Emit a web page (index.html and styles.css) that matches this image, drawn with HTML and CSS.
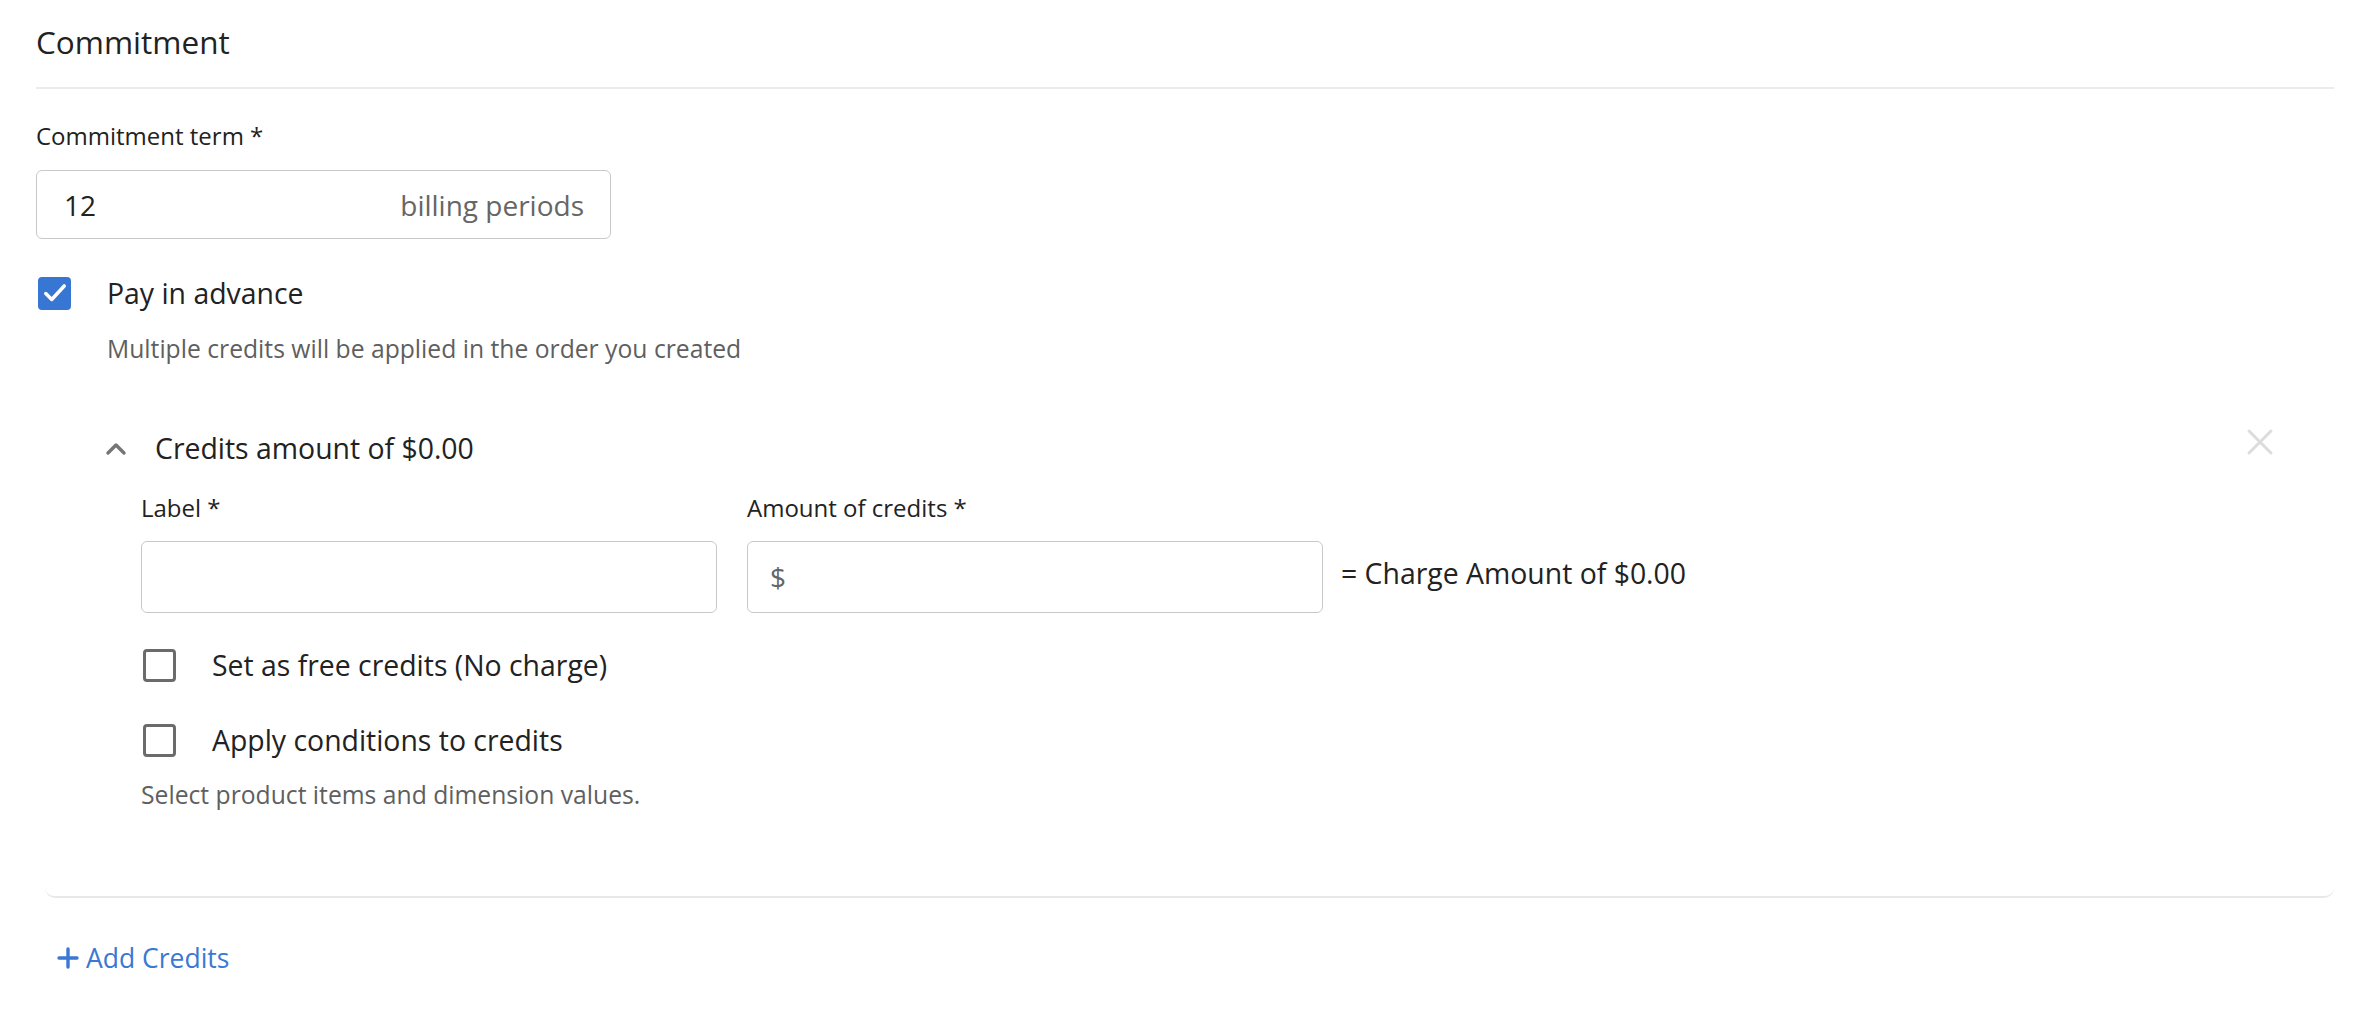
FILE: index.html
```html
<!DOCTYPE html>
<html lang="en">
<head>
<meta charset="utf-8">
<title>Commitment</title>
<link rel="stylesheet" href="styles.css">
</head>
<body>
<div class="page">
  <div class="section-header">
    <h2 class="section-title">Commitment</h2>
  </div>

  <div class="field term-field">
    <label class="field-label">Commitment term *</label>
    <div class="input input-term">
      <span class="input-value">12</span>
      <span class="input-suffix">billing periods</span>
    </div>
  </div>

  <div class="check-row pay-row">
    <span class="checkbox checked">
      <svg class="check-icon" viewBox="0 0 24 24" width="26" height="26"><path d="M3.5 12.5l5.5 5.5L20.5 5.5" fill="none" stroke="#fff" stroke-width="3.2" stroke-linecap="round" stroke-linejoin="round"/></svg>
    </span>
    <span class="check-label">Pay in advance</span>
  </div>
  <p class="helper helper-pay">Multiple credits will be applied in the order you created</p>

  <div class="credit-card">
    <div class="card-header">
      <span class="chevron">
        <svg viewBox="0 0 24 24" width="24" height="24"><path d="M4 17l8-8 8 8" fill="none" stroke="#767676" stroke-width="3.4" stroke-linecap="round" stroke-linejoin="round"/></svg>
      </span>
      <span class="card-title">Credits amount of $0.00</span>
      <span class="close">
        <svg viewBox="0 0 28 28" width="28" height="28"><path d="M3 3L25 25M25 3L3 25" fill="none" stroke="#dcdcdc" stroke-width="3" stroke-linecap="round"/></svg>
      </span>
    </div>
    <div class="card-body">
      <div class="fields-row">
        <div class="field">
          <label class="field-label">Label *</label>
          <div class="input input-wide"></div>
        </div>
        <div class="field">
          <label class="field-label">Amount of credits *</label>
          <div class="input input-wide"><span class="input-prefix">$</span></div>
        </div>
        <span class="charge">= Charge Amount of $0.00</span>
      </div>
      <div class="check-row free-row">
        <span class="checkbox"></span>
        <span class="check-label">Set as free credits (No charge)</span>
      </div>
      <div class="check-row cond-row">
        <span class="checkbox"></span>
        <span class="check-label">Apply conditions to credits</span>
      </div>
      <p class="helper helper-cond">Select product items and dimension values.</p>
    </div>
  </div>

  <a class="add-link" href="#">
    <svg viewBox="0 0 22 22" width="22" height="22"><path d="M11 2v18M2 11h18" fill="none" stroke="#3a78d3" stroke-width="3.4" stroke-linecap="round"/></svg>
    <span>Add Credits</span>
  </a>
</div>
</body>
</html>
```

FILE: styles.css
```css
* { box-sizing: border-box; }
html, body { margin: 0; padding: 0; background: #fff; }
body {
  font-family: "Open Sans", "Noto Sans", "Liberation Sans", sans-serif;
  color: #222;
}
.page {
  padding: 0 24px 0 36px;
}
.section-header {
  padding: 21px 0 24px;
  border-bottom: 2px solid #ececec;
}
.section-title {
  margin: 0;
  font-size: 31.5px;
  font-weight: 400;
  line-height: 42px;
}
.term-field {
  margin-top: 32px;
}
.field {
  display: flex;
  flex-direction: column;
}
.field-label {
  font-size: 24px;
  line-height: 30px;
  color: #222;
}
.input {
  margin-top: 19px;
  height: 69px;
  border: 1.5px solid #c9c9c9;
  border-radius: 6px;
  display: flex;
  align-items: center;
  background: #fff;
}
.input-term {
  width: 575px;
  padding: 0 26px 0 27px;
  justify-content: space-between;
}
.input-value {
  font-size: 28px;
  color: #222;
}
.input-suffix {
  font-size: 28px;
  color: #666;
}
.check-row {
  display: flex;
  align-items: center;
  height: 40px;
}
.pay-row {
  margin-top: 34px;
  padding-left: 2px;
  gap: 36px;
}
.checkbox {
  width: 33px;
  height: 33px;
  border: 3px solid #6b6b6b;
  border-radius: 4px;
  display: flex;
  align-items: center;
  justify-content: center;
  flex: none;
}
.checkbox.checked {
  background: #3777d3;
  border-color: #3777d3;
}
.check-icon {
  flex: none;
  display: block;
}
.check-label {
  font-size: 28.4px;
  line-height: 40px;
}
.helper {
  margin: 0;
  font-size: 24.7px;
  line-height: 30px;
  color: #5f5f5f;
}
.helper-pay {
  margin-top: 21px;
  padding-left: 71px;
}
.credit-card {
  margin-top: 64px;
  margin-left: 9px;
  border-bottom: 2px solid #e8e8e8;
  border-radius: 0 0 10px 10px;
  padding-bottom: 86px;
}
.card-header {
  display: flex;
  align-items: center;
  height: 40px;
  padding-left: 59px;
  padding-right: 60px;
}
.chevron {
  width: 24px;
  height: 24px;
  display: flex;
}
.card-title {
  margin-left: 27px;
  font-size: 28.4px;
  line-height: 40px;
  flex: 1;
}
.close {
  width: 28px;
  height: 28px;
  display: flex;
  margin-top: -12px;
}
.card-body {
  padding-left: 96px;
  margin-top: 25px;
}
.fields-row {
  display: flex;
  align-items: flex-end;
  gap: 30px;
}
.input-wide {
  width: 576px;
  height: 72px;
  margin-top: 18px;
  padding-left: 22px;
}
.input-prefix {
  font-size: 28px;
  color: #666;
}
.charge {
  font-size: 28.4px;
  line-height: 72px;
  margin-left: -12px;
  margin-bottom: 4px;
}
.free-row {
  margin-top: 32px;
  padding-left: 2px;
  gap: 36px;
}
.cond-row {
  margin-top: 35px;
  padding-left: 2px;
  gap: 36px;
}
.helper-cond {
  margin-top: 20px;
}
.add-link {
  display: inline-flex;
  align-items: center;
  gap: 7px;
  margin-top: 43px;
  margin-left: 21px;
  color: #3a78d3;
  text-decoration: none;
  font-size: 26.5px;
  line-height: 34px;
}
```
